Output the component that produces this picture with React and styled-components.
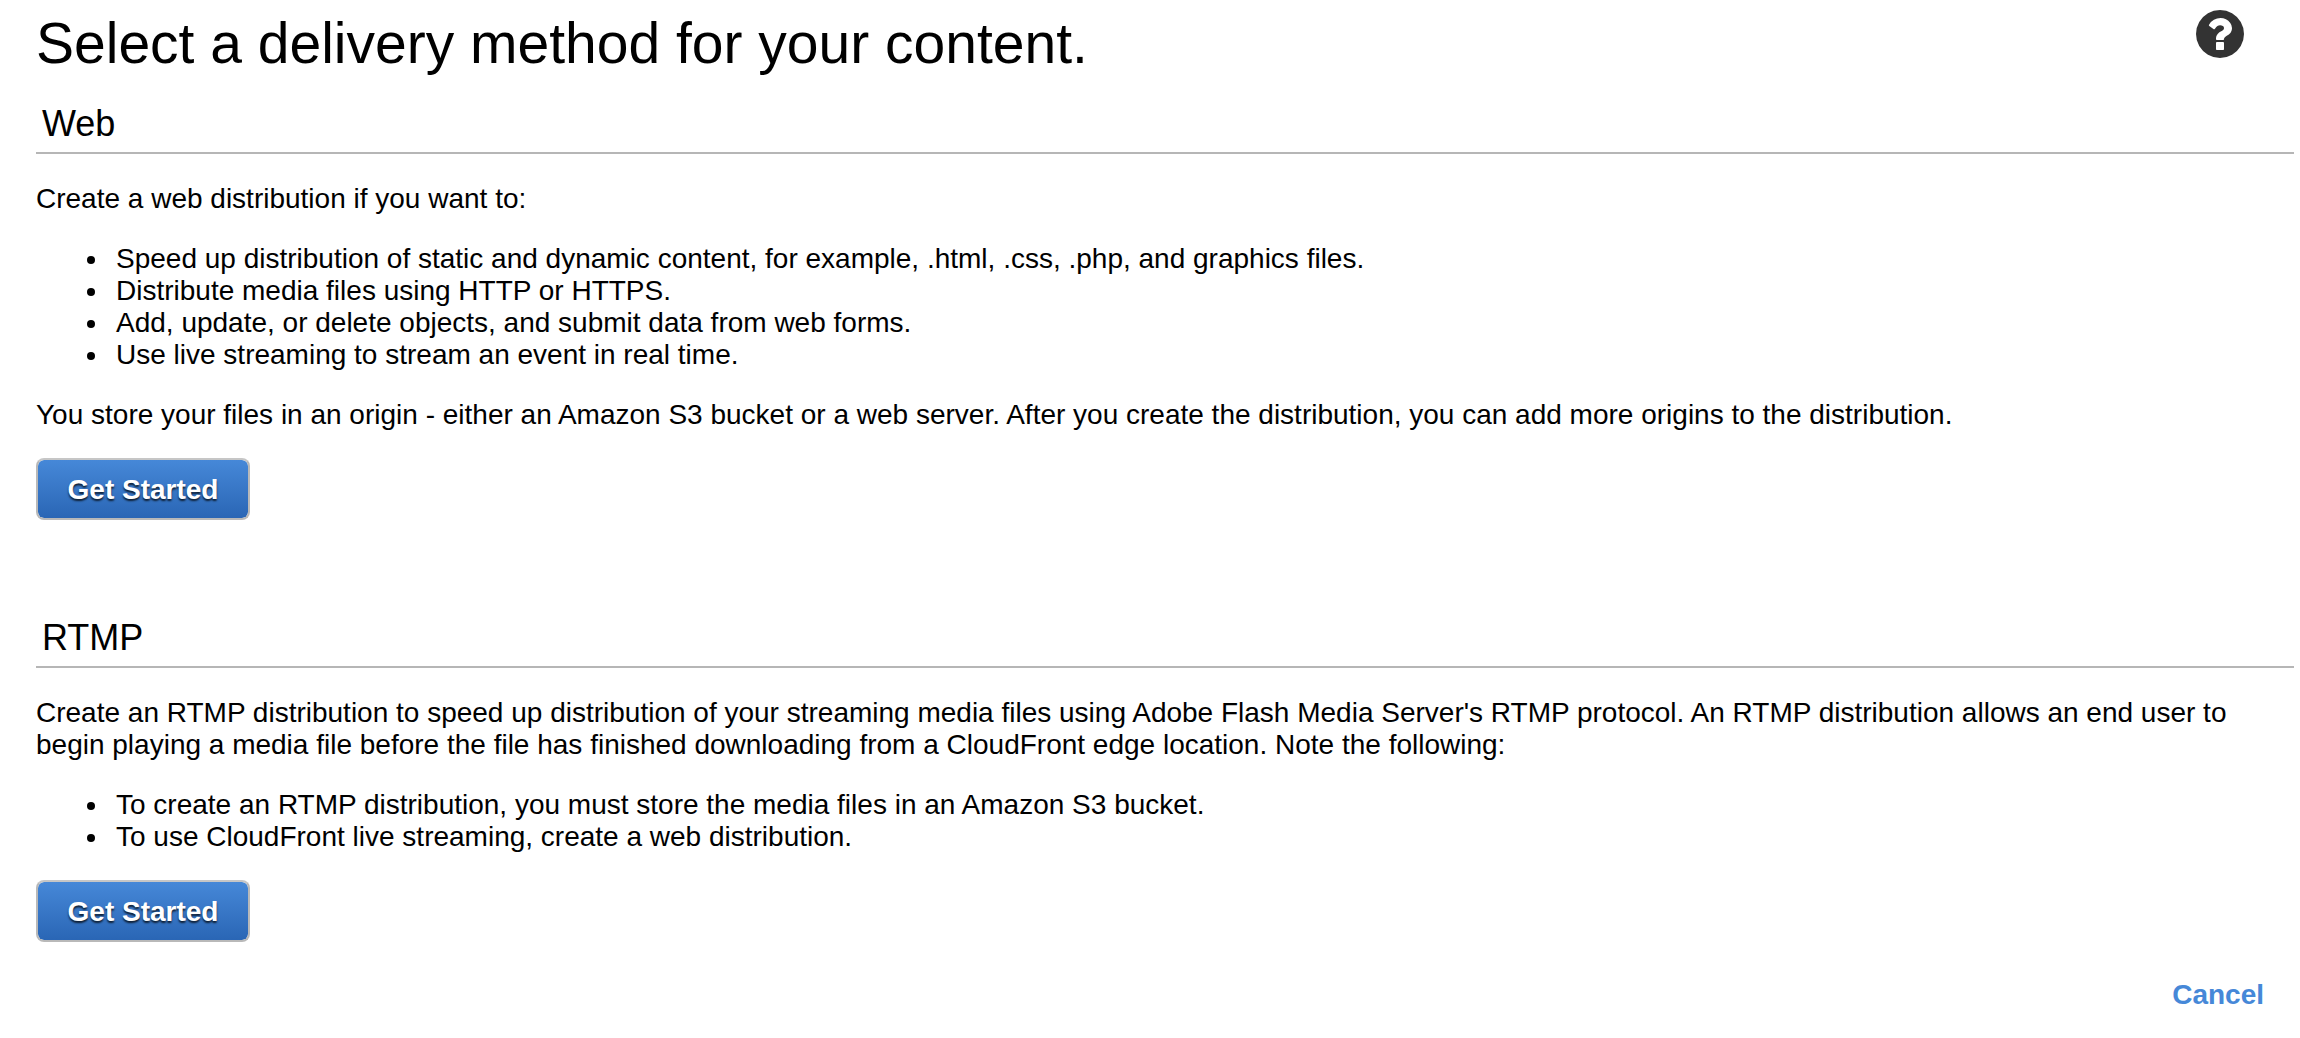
import React from 'react';
import styled, { createGlobalStyle } from 'styled-components';

const GlobalStyle = createGlobalStyle`
  *, *::before, *::after { box-sizing: border-box; }
  body {
    margin: 0;
    background: #fff;
    color: #000;
    font: 28px/32px Helvetica, "Liberation Sans", Arial, sans-serif;
  }
`;

const Page = styled.main`
  padding: 10px 6px 28px 36px;
`;

const Header = styled.header`
  display: flex;
  justify-content: space-between;
  align-items: flex-start;
  padding-right: 50px;
  margin-bottom: 28px;
`;

const Title = styled.h1`
  margin: 0;
  font-size: 57px;
  line-height: 66px;
  font-weight: 400;
`;

const HelpButton = styled.button`
  display: block;
  flex: none;
  padding: 0;
  border: 0;
  background: none;
  color: #333;
  cursor: pointer;

  svg {
    display: block;
    width: 48px;
    height: 48px;
  }
`;

const Section = styled.section`
  & + & {
    margin-top: 98px;
  }
`;

const SectionTitle = styled.h2`
  margin: 0 0 29px;
  padding: 0 6px 8px;
  border-bottom: 2px solid #b6b6b6;
  font-size: 36px;
  line-height: 40px;
  font-weight: 400;
`;

const Paragraph = styled.p`
  margin: 0 0 28px;
`;

const List = styled.ul`
  margin: 0 0 28px;
  padding-left: 74px;

  li {
    padding-left: 6px;
  }
`;

const PrimaryButton = styled.button`
  display: block;
  min-width: 214px;
  margin-top: -1px;
  padding: 14px 28px 12px;
  border: 2px solid #b9b9b9;
  border-top-color: #c6c6c6;
  border-radius: 8px;
  background: linear-gradient(#4688d8, #2a66b5) padding-box;
  color: #fff;
  font: inherit;
  font-weight: 700;
  text-shadow: 0 2px 2px rgba(0, 0, 0, 0.75);
  cursor: pointer;
`;

const Footer = styled.footer`
  display: flex;
  justify-content: flex-end;
  padding-right: 30px;
  margin-top: 37px;
`;

const CancelLink = styled.a`
  color: #4688d8;
  font-weight: 700;
  text-decoration: none;
`;

function HelpIcon() {
  return (
    <svg viewBox="128 128 1536 1536" fill="currentColor" aria-hidden="true">
      <path d="M1024 1376v-192q0-14-9-23t-23-9h-192q-14 0-23 9t-9 23v192q0 14 9 23t23 9h192q14 0 23-9t9-23zm256-672q0-88-55.5-163t-138.5-116-170-41q-243 0-371 213-15 24 8 42l132 100q7 6 19 6 16 0 25-12 53-68 86-92 34-24 86-24 48 0 85.5 26t37.5 59q0 38-20 61t-68 45q-63 28-115.500 86.500t-52.500 125.500v36q0 14 9 23t23 9h192q14 0 23-9t9-23q0-19 21.500-49.500t54.500-49.500q32-18 49-28.500t46-35 44.500-48 28-60.500 12.500-81zm384 192q0 209-103 385.500t-279.500 279.500-385.500 103-385.500-103-279.500-279.500-103-385.500 103-385.500 279.500-279.500 385.500-103 385.500 103 279.500 279.500 103 385.500z" />
    </svg>
  );
}

const webUses = [
  'Speed up distribution of static and dynamic content, for example, .html, .css, .php, and graphics files.',
  'Distribute media files using HTTP or HTTPS.',
  'Add, update, or delete objects, and submit data from web forms.',
  'Use live streaming to stream an event in real time.',
];

const rtmpNotes = [
  'To create an RTMP distribution, you must store the media files in an Amazon S3 bucket.',
  'To use CloudFront live streaming, create a web distribution.',
];

function BulletList({ items }) {
  return (
    <List>
      {items.map((item) => (
        <li key={item}>{item}</li>
      ))}
    </List>
  );
}

export default function App() {
  return (
    <>
      <GlobalStyle />
      <Page>
        <Header>
          <Title>Select a delivery method for your content.</Title>
          <HelpButton type="button" aria-label="Help">
            <HelpIcon />
          </HelpButton>
        </Header>

        <Section>
          <SectionTitle>Web</SectionTitle>
          <Paragraph>Create a web distribution if you want to:</Paragraph>
          <BulletList items={webUses} />
          <Paragraph>
            You store your files in an origin - either an Amazon S3 bucket or a web server. After
            you create the distribution, you can add more origins to the distribution.
          </Paragraph>
          <PrimaryButton type="button">Get Started</PrimaryButton>
        </Section>

        <Section>
          <SectionTitle>RTMP</SectionTitle>
          <Paragraph>
            Create an RTMP distribution to speed up distribution of your streaming media files
            using Adobe Flash Media Server's RTMP protocol. An RTMP distribution allows an end user
            to begin playing a media file before the file has finished downloading from a
            CloudFront edge location. Note the following:
          </Paragraph>
          <BulletList items={rtmpNotes} />
          <PrimaryButton type="button">Get Started</PrimaryButton>
        </Section>

        <Footer>
          <CancelLink href="#cancel">Cancel</CancelLink>
        </Footer>
      </Page>
    </>
  );
}
